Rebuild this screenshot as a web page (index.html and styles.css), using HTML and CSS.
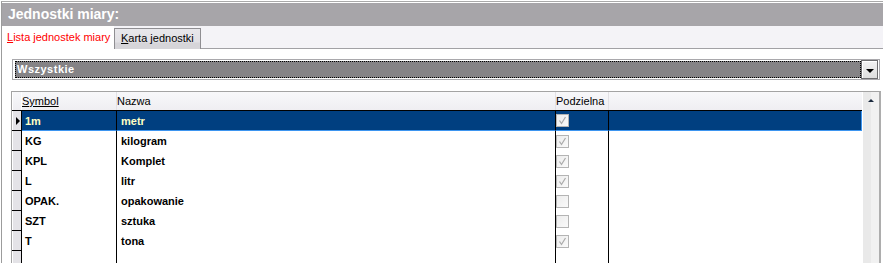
FILE: index.html
```html
<!DOCTYPE html>
<html>
<head>
    <title>Jednostki miary</title>
    <link rel="stylesheet" href="styles.css">
</head>
<body>
  <div id="window">
    <div id="title">Jednostki miary:</div>

    <div id="tabs">
      <div class="tab active"><u>L</u>ista jednostek miary</div>
      <div class="tab"><u>K</u>arta jednostki</div>
    </div>

    <div id="filter">
      <div id="filterValue">Wszystkie</div>
      <div id="filterButton"><span class="arrow-down"></span></div>
    </div>

    <div id="grid">
      <div id="gridBody">
        <div class="row head">
          <div class="ind"></div>
          <div class="cell sym"><u>Symbol</u></div>
          <div class="cell name">Nazwa</div>
          <div class="cell chk">Podzielna</div>
          <div class="cell rest"></div>
        </div>
        <!-- rows -->
        <div class="row selected">
          <div class="ind"><span class="arrow-right"></span></div>
          <div class="cell sym">1m</div>
          <div class="cell name">metr</div>
          <div class="cell chk"><span class="box"><svg width="11" height="11" viewBox="0 0 11 11"><path d="M2.5 5.5 L4.5 8.5 L8.5 2" fill="none" stroke="#a9a9a9" stroke-width="1.2"/></svg></span></div>
          <div class="cell rest"></div>
        </div>
        <div class="row">
          <div class="ind"></div>
          <div class="cell sym">KG</div>
          <div class="cell name">kilogram</div>
          <div class="cell chk"><span class="box"><svg width="11" height="11" viewBox="0 0 11 11"><path d="M2.5 5.5 L4.5 8.5 L8.5 2" fill="none" stroke="#a9a9a9" stroke-width="1.2"/></svg></span></div>
          <div class="cell rest"></div>
        </div>
        <div class="row">
          <div class="ind"></div>
          <div class="cell sym">KPL</div>
          <div class="cell name">Komplet</div>
          <div class="cell chk"><span class="box"><svg width="11" height="11" viewBox="0 0 11 11"><path d="M2.5 5.5 L4.5 8.5 L8.5 2" fill="none" stroke="#a9a9a9" stroke-width="1.2"/></svg></span></div>
          <div class="cell rest"></div>
        </div>
        <div class="row">
          <div class="ind"></div>
          <div class="cell sym">L</div>
          <div class="cell name">litr</div>
          <div class="cell chk"><span class="box"><svg width="11" height="11" viewBox="0 0 11 11"><path d="M2.5 5.5 L4.5 8.5 L8.5 2" fill="none" stroke="#a9a9a9" stroke-width="1.2"/></svg></span></div>
          <div class="cell rest"></div>
        </div>
        <div class="row">
          <div class="ind"></div>
          <div class="cell sym">OPAK.</div>
          <div class="cell name">opakowanie</div>
          <div class="cell chk"><span class="box"></span></div>
          <div class="cell rest"></div>
        </div>
        <div class="row">
          <div class="ind"></div>
          <div class="cell sym">SZT</div>
          <div class="cell name">sztuka</div>
          <div class="cell chk"><span class="box"></span></div>
          <div class="cell rest"></div>
        </div>
        <div class="row">
          <div class="ind"></div>
          <div class="cell sym">T</div>
          <div class="cell name">tona</div>
          <div class="cell chk"><span class="box"><svg width="11" height="11" viewBox="0 0 11 11"><path d="M2.5 5.5 L4.5 8.5 L8.5 2" fill="none" stroke="#a9a9a9" stroke-width="1.2"/></svg></span></div>
          <div class="cell rest"></div>
        </div>
        <div class="row">
          <div class="ind"></div>
          <div class="cell sym"></div>
          <div class="cell name"></div>
          <div class="cell chk"></div>
          <div class="cell rest"></div>
        </div>
      </div>
      <div id="scrollbar"><span class="arrow-up"></span></div>
    </div>
  </div>
</body>
</html>
```

FILE: styles.css
```css
  body {
    margin: 0;
    height: 263px;
    background-color: #fff;
    font-family: "Liberation Sans", Arial, sans-serif;
    font-size: 11px;
    overflow: hidden;
  }

  #window {
    box-sizing: border-box;
    margin-top: 1px;
    margin-left: 1px;
    border-top: 1px solid #a9a9a9;
    border-left: 1px solid #9c9c9c;
    padding-top: 1px;
    height: 262px;
    overflow: hidden;
  }

  #title {
    height: 23px;
    line-height: 23px;
    background-color: #a7a5a9;
    color: #fff;
    font-weight: bold;
    font-size: 14px;
    padding-left: 6px;
  }

  #tabs {
    height: 22px;
    background-color: #f4f3f7;
    border-bottom: 1px solid #a2a1a5;
    display: flex;
    align-items: flex-end;
  }

  .tab {
    box-sizing: border-box;
    height: 21px;
    line-height: 18px;
    color: #000;
    white-space: nowrap;
    background: linear-gradient(#e8e7eb 0%, #e2e1e5 65%, #d6d5d9 70%, #d6d5d9 100%);
    border: 1px solid #8f8e92;
    border-bottom: none;
    padding: 0 6px;
    margin-bottom: -1px;
  }

  .tab.active {
    background: #fff;
    color: #ff0000;
    border: none;
    height: 23px;
    line-height: 22px;
    width: 112px;
    padding: 0 0 0 5px;
  }

  #filter {
    display: flex;
    margin: 10px 3px 0 10px;
    border: 1px solid #a9a8ac;
    height: 19px;
    padding: 0 1px;
  }

  #filterValue {
    flex: 1;
    margin: 1px 0 1px 1px;
    background-color: #858386;
    border: 1px dotted #000;
    color: #fff;
    font-weight: bold;
    letter-spacing: 0.5px;
    line-height: 15px;
    padding-left: 1px;
  }

  #filterButton {
    box-sizing: border-box;
    width: 17px;
    border: 1px solid #6e6e70;
    background: linear-gradient(#f2f2f2, #dedede);
    box-shadow: inset 1px 1px 0 #fff;
    display: flex;
    align-items: center;
    justify-content: center;
  }

  .arrow-down {
    width: 0;
    height: 0;
    border-left: 4px solid transparent;
    border-right: 4px solid transparent;
    border-top: 4px solid #000;
    margin-top: 2px;
  }

  #grid {
    display: flex;
    margin: 11px 2px 0 9px;
    border-top: 1px solid #a3a3a3;
    border-left: 1px solid #a3a3a3;
    border-right: 2px solid #adadad;
    height: 200px;
  }

  #gridBody {
    width: 850px;
  }

  #scrollbar {
    width: 16px;
    background: linear-gradient(90deg, #e9e9e9 0, #e9e9e9 8px, #f1f1f1 8px);
    display: flex;
    justify-content: center;
    margin-left: 1px;
  }

  .arrow-up {
    width: 0;
    height: 0;
    border-left: 3px solid transparent;
    border-right: 3px solid transparent;
    border-bottom: 3px solid #1b2a3e;
    margin-top: 7px;
  }

  .row {
    display: flex;
    height: 20px;
  }

  .row.head {
    height: 18px;
    border-bottom: 1px solid #000;
    background: linear-gradient(#f8f8fa, #efeef2);
  }

  .ind {
    box-sizing: border-box;
    width: 10px;
    background-color: #e4e3e7;
    border-right: 1px solid #000;
    border-bottom: 1px solid #000;
    box-shadow: inset 1px 0 0 #fff;
    display: flex;
    align-items: center;
    justify-content: center;
  }

  .head .ind {
    border-bottom: none;
    background: none;
    border-right: 1px solid #fff;
  }

  .arrow-right {
    width: 0;
    height: 0;
    border-top: 4px solid transparent;
    border-bottom: 4px solid transparent;
    border-left: 4px solid #000;
    margin-left: 2px;
  }

  .cell {
    box-sizing: border-box;
    border-right: 1px solid #000;
    font-weight: bold;
    line-height: 20px;
    white-space: nowrap;
    display: flex;
    align-items: center;
  }

  .head .cell {
    font-weight: normal;
    line-height: 18px;
    border-right: 1px solid #e2e1e5;
    padding-left: 0;
  }

  .head .cell.rest {
    border-right: none;
  }

  .sym {
    width: 95px;
    padding-left: 3px;
  }

  .name {
    width: 439px;
    padding-left: 4px;
  }

  .chk {
    width: 53px;
  }

  .rest {
    flex: 1;
    border-right: none;
  }

  .row.selected .cell {
    background-color: #003f80;
    color: #ffffc4;
    border-bottom: 1px solid #3d95f0;
  }

  .row.selected .rest {
    border-right: 1px solid #3d95f0;
  }

  .box {
    box-sizing: border-box;
    width: 13px;
    height: 13px;
    border: 1px solid #b4b4b4;
    background: linear-gradient(135deg, #ececec, #fafafa);
    display: flex;
    align-items: center;
    justify-content: center;
  }
```
